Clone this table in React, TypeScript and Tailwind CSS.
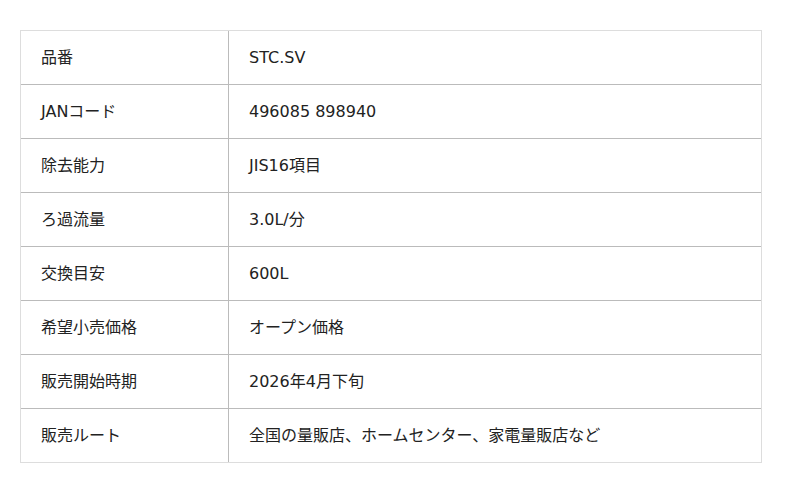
import React from "react";

const rows: [string, string][] = [
  ["品番", "STC.SV"],
  ["JANコード", "496085 898940"],
  ["除去能力", "JIS16項目"],
  ["ろ過流量", "3.0L/分"],
  ["交換目安", "600L"],
  ["希望小売価格", "オープン価格"],
  ["販売開始時期", "2026年4月下旬"],
  ["販売ルート", "全国の量販店、ホームセンター、家電量販店など"],
];

export default function App() {
  return (
    <div
      className="w-[800px] h-[493px] bg-white pt-[30px] pl-[20px]"
      style={{ fontFamily: '"DejaVu Sans", "Noto Sans CJK JP", sans-serif' }}
    >
      <div className="w-[742px] border border-[#dddddd] text-[16px] text-[#222222] divide-y divide-[#bbbbbb]">
        {rows.map(([k, v], i) => (
          <div key={i} className="flex box-content h-[53px]">
            <div className="w-[208px] flex items-center pl-[20px] border-r border-[#bbbbbb]">
              {k}
            </div>
            <div className="flex-1 flex items-center pl-[20px]">{v}</div>
          </div>
        ))}
      </div>
    </div>
  );
}
